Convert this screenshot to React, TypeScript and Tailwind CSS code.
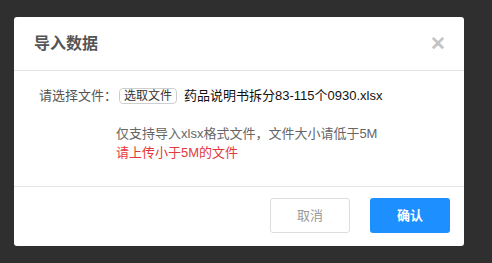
export default function App() {
  return (
    <div
      className="w-[492px] h-[263px] bg-[#2f2f2f] pt-[17px] pl-[14px] overflow-hidden"
      style={{ fontFamily: '"Liberation Sans", "Noto Sans CJK SC", sans-serif' }}
    >
      {/* Dialog */}
      <div className="w-[450px] h-[229px] bg-white rounded-[3px] flex flex-col">
        {/* Header */}
        <div className="h-[54px] border-b border-[#e5e5e5] flex items-center justify-between pl-[20px] pr-[18px]">
          <h2 className="text-[16px] font-bold text-[#555] leading-none">导入数据</h2>
          <span className="text-[19px] font-bold text-[#c4c4c4] leading-none">✕</span>
        </div>

        {/* Body */}
        <div className="h-[116px] border-b border-[#e5e5e5] pl-[25px] pt-[16px]">
          <div className="flex items-center h-[18px]">
            <span className="text-[13px] text-[#555] w-[80px]">请选择文件：</span>
            <button className="h-[16px] px-[4px] border border-[#cfcfcf] rounded-[4px] text-[12px] leading-none text-[#333] bg-white">
              选取文件
            </button>
            <span className="ml-[7px] text-[13px] text-[#111]">药品说明书拆分83-115个0930.xlsx</span>
          </div>
          <div className="ml-[77px] mt-[19px] text-[13px] leading-[19px]">
            <p className="text-[#666]">仅支持导入xlsx格式文件，文件大小请低于5M</p>
            <p className="text-[#e4393c]">请上传小于5M的文件</p>
          </div>
        </div>

        {/* Footer */}
        <div className="flex justify-end gap-[20px] pt-[11px] pr-[14px]">
          <button className="w-[80px] h-[35px] border border-[#ddd] rounded-[3px] text-[13px] text-[#999] bg-white">
            取消
          </button>
          <button className="w-[80px] h-[35px] rounded-[3px] text-[13px] font-bold text-white bg-[#1e8fff]">
            确认
          </button>
        </div>
      </div>
    </div>
  );
}
